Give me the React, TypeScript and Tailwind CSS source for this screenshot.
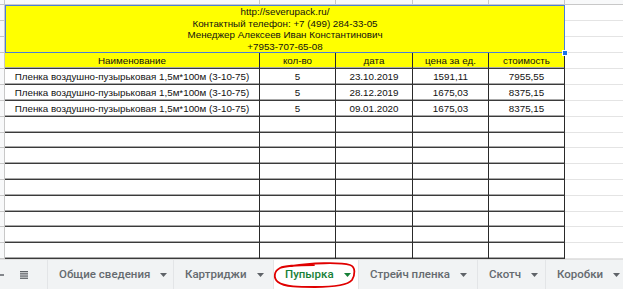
import React from 'react';

const widths = [255, 76, 77, 76, 76];

const rows = [
  ['Пленка воздушно-пузырьковая 1,5м*100м (3-10-75)', '5', '23.10.2019', '1591,11', '7955,55'],
  ['Пленка воздушно-пузырьковая 1,5м*100м (3-10-75)', '5', '28.12.2019', '1675,03', '8375,15'],
  ['Пленка воздушно-пузырьковая 1,5м*100м (3-10-75)', '5', '09.01.2020', '1675,03', '8375,15'],
];

const emptyHeights = [16, 15, 16, 16, 16, 16, 15, 16, 16];

const tabs = [
  { name: 'Общие сведения', w: 126 },
  { name: 'Картриджи', w: 100 },
  { name: 'Пупырка', w: 85, active: true },
  { name: 'Стрейч пленка', w: 119 },
  { name: 'Скотч', w: 68 },
  { name: 'Коробки', w: 90 },
];

function Caret({ color }: { color: string }) {
  return (
    <svg width="7" height="4" viewBox="0 0 7 4" className="shrink-0">
      <path d="M0 0h7L3.5 4z" fill={color} />
    </svg>
  );
}

function Row({ cells, h, yellow }: { cells: string[]; h: number; yellow?: boolean }) {
  return (
    <div className="flex" style={{ height: h }}>
      <div className="w-[5px] shrink-0 bg-[#f8f9fa] border-r border-b border-[#c8c8c8]" />
      {widths.map((w, i) => (
        <div
          key={i}
          style={{ width: w }}
          className={`shrink-0 flex items-center justify-center border-r border-b border-r-[#2a2a2a] border-b-[#3a3a3a] shadow-[inset_0_-1px_0_#a8a8a8] text-[9.8px] leading-none text-[#111] whitespace-nowrap overflow-hidden ${yellow ? 'bg-[#ffff00]' : 'bg-white'}`}
        >
          {cells[i]}
        </div>
      ))}
      <div className="flex-1 border-b border-[#e4e4e4]" />
    </div>
  );
}

export default function App() {
  return (
    <div className="w-[623px] h-[289px] overflow-hidden bg-white flex flex-col font-['Liberation_Sans',Arial,sans-serif]">
      {/* column header strip */}
      <div className="flex h-[5px] shrink-0 bg-[#f8f9fa] border-b border-[#c8c8c8]">
        <div className="w-[5px] shrink-0 border-r border-[#c8c8c8]" />
        {widths.map((w, i) => (
          <div key={i} style={{ width: w }} className="shrink-0 border-r border-[#c8c8c8]" />
        ))}
        <div className="flex-1" />
      </div>

      {/* merged contact block */}
      <div className="flex h-[48px] shrink-0">
        <div className="w-[5px] shrink-0 bg-[#f8f9fa] border-r border-[#c8c8c8] flex flex-col">
          <div className="h-[16px] border-b border-[#c8c8c8]" />
          <div className="h-[16px] border-b border-[#c8c8c8]" />
          <div className="h-[16px] border-b border-[#c8c8c8]" />
        </div>
        <div className="relative w-[560px] shrink-0 bg-[#ffff00] border border-[#4a7fd8] flex flex-col items-center justify-center text-[9.8px] leading-[11.5px] text-[#111]">
          <div>http://severupack.ru/</div>
          <div>Контактный телефон: +7 (499) 284-33-05</div>
          <div>Менеджер Алексеев Иван Константинович</div>
          <div>+7953-707-65-08</div>
          <div className="absolute right-[-4px] bottom-[-4px] w-[6px] h-[6px] bg-[#1a73e8] border border-white z-10" />
        </div>
        <div className="flex-1 flex flex-col">
          <div className="h-[16px] border-b border-[#e4e4e4]" />
          <div className="h-[16px] border-b border-[#e4e4e4]" />
          <div className="h-[16px] border-b border-[#e4e4e4]" />
        </div>
      </div>

      <Row cells={['Наименование', 'кол-во', 'дата', 'цена за ед.', 'стоимость']} h={16} yellow />
      {rows.map((r, i) => (
        <Row key={i} cells={r} h={16} />
      ))}
      {emptyHeights.map((h, i) => (
        <Row key={'e' + i} cells={[]} h={h} />
      ))}

      {/* sheet tabs */}
      <div className="relative flex h-[30px] shrink-0 bg-[#f1f3f4] border-t border-[#e0e0e0] font-['Roboto',sans-serif] text-[11.5px] font-medium text-[#656a6f]">
        <div className="w-[47px] shrink-0 flex items-center">
          <svg width="10" height="10" viewBox="0 0 10 10" className="ml-[-6px]">
            <path d="M5 0v10M0 5h10" stroke="#5f6368" strokeWidth="1.6" />
          </svg>
          <svg width="8" height="8" viewBox="0 0 8 8" className="ml-[16px]">
            <rect x="0" y="0" width="8" height="1.3" fill="#5f6368" />
            <rect x="0" y="2.2" width="8" height="1.3" fill="#5f6368" />
            <rect x="0" y="4.4" width="8" height="1.3" fill="#5f6368" />
            <rect x="0" y="6.6" width="8" height="1.3" fill="#5f6368" />
          </svg>
        </div>
        {tabs.map((t) => (
          <div
            key={t.name}
            style={{ width: t.w }}
            className={`shrink-0 flex items-center gap-[10px] pl-[11px] border-l border-[#e3e5e7] ${t.active ? 'bg-white text-[#188038]' : ''}`}
          >
            <span className="whitespace-nowrap">{t.name}</span>
            <Caret color={t.active ? '#188038' : '#5f6368'} />
          </div>
        ))}
        {/* red hand-drawn circle */}
        <svg className="absolute left-[270px] top-[1px]" width="90" height="29" viewBox="0 0 90 29" fill="none">
          <path
            d="M22 5C40 2 70 1 80 4C86 6 85 14 82 19C77 25 60 26 45 26C30 26 14 26 8 21C3 17 4 10 10 7C16 4 30 4 44 4"
            stroke="#e00000"
            strokeWidth="1.8"
            strokeLinecap="round"
          />
        </svg>
      </div>
    </div>
  );
}
